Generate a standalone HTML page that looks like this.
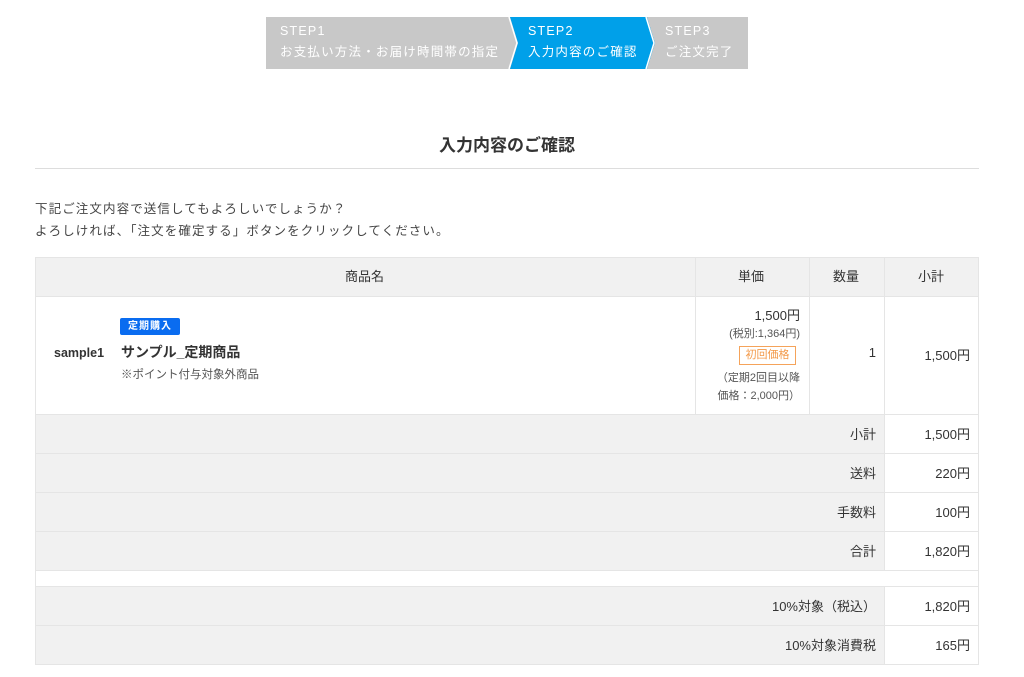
<!DOCTYPE html>
<html><head><meta charset="utf-8"><style>
*{margin:0;padding:0;box-sizing:border-box}
body{width:1024px;height:677px;background:#fff;font-family:"Liberation Sans","Noto Sans CJK JP",sans-serif;color:#333;position:relative;overflow:hidden}
.a{position:absolute;white-space:nowrap}
.st{color:#fff;font-size:12.5px;line-height:21px;letter-spacing:1.2px}
.c{position:absolute;border:1px solid #e5e5e5}
.g{background:#f1f1f1}
.r{text-align:right}
.t{font-size:13px;position:absolute;white-space:nowrap}
</style></head><body>
<svg class="a" style="left:0;top:0" width="1024" height="80">
<rect x="266" y="17" width="482" height="52" fill="#c8c8c8"/>
<polygon points="510,17 647,17 655,43 647,69 510,69 518,43" fill="#00a0e9"/>
<polyline points="646,17 654,43 646,69" fill="none" stroke="#fff" stroke-width="1.5"/>
<polyline points="509,17 517,43 509,69" fill="none" stroke="#fff" stroke-width="1.5"/>
</svg>
<div class="a st" style="left:280px;top:21px">STEP1<br>お支払い方法・お届け時間帯の指定</div>
<div class="a st" style="left:528px;top:21px">STEP2<br>入力内容のご確認</div>
<div class="a st" style="left:665px;top:21px">STEP3<br>ご注文完了</div>
<div class="a" style="left:0;width:1014px;top:131px;text-align:center;font-size:17px;font-weight:bold;color:#333">入力内容のご確認</div>
<div class="a" style="left:35px;top:168px;width:944px;height:1px;background:#ddd"></div>
<div class="a" style="left:35px;top:198px;font-size:12.5px;line-height:22px;letter-spacing:1.1px;color:#444">下記ご注文内容で送信してもよろしいでしょうか？<br>よろしければ、「注文を確定する」ボタンをクリックしてください。</div>

<div class="c g" style="left:35px;top:257px;width:661px;height:40px"></div>
<div class="c g" style="left:695px;top:257px;width:115px;height:40px"></div>
<div class="c g" style="left:809px;top:257px;width:76px;height:40px"></div>
<div class="c g" style="left:884px;top:257px;width:95px;height:40px"></div>
<div class="t" style="left:345px;top:266px">商品名</div>
<div class="t" style="left:738px;top:266px">単価</div>
<div class="t" style="left:833px;top:266px">数量</div>
<div class="t" style="left:918px;top:266px">小計</div>

<div class="c" style="left:35px;top:296px;width:661px;height:119px"></div>
<div class="c" style="left:695px;top:296px;width:115px;height:119px"></div>
<div class="c" style="left:809px;top:296px;width:76px;height:119px"></div>
<div class="c" style="left:884px;top:296px;width:95px;height:119px"></div>
<div class="t" style="left:54px;top:346px;font-weight:bold;font-size:12.5px">sample1</div>
<div class="a" style="left:120px;top:318px;width:60px;height:17px;background:#0a6cf0;border-radius:2px;color:#fff;font-size:10px;font-weight:bold;text-align:center;line-height:17px;letter-spacing:1px">定期購入</div>
<div class="t" style="left:121px;top:342px;font-size:14px;font-weight:bold">サンプル_定期商品</div>
<div class="t" style="left:121px;top:366px;font-size:11.5px;color:#555">※ポイント付与対象外商品</div>
<div class="t r" style="left:696px;width:104px;top:305px">1,500円</div>
<div class="t r" style="left:696px;width:104px;top:325px;font-size:11px;color:#555">(税別:1,364円)</div>
<div class="a" style="left:739px;top:346px;width:57px;height:19px;border:1px solid #f5a35a;color:#f39a4a;font-size:11px;text-align:center;line-height:17px">初回価格</div>
<div class="t r" style="left:696px;width:104px;top:369px;font-size:11px;color:#555;line-height:18px">（定期2回目以降<br>価格：2,000円）</div>
<div class="t r" style="left:810px;width:66px;top:345px">1</div>
<div class="t r" style="left:885px;width:85px;top:345px">1,500円</div>

<div class="c g" style="left:35px;top:414px;width:850px;height:40px"></div><div class="c" style="left:884px;top:414px;width:95px;height:40px"></div>
<div class="t r" style="left:36px;width:840px;top:424px">小計</div><div class="t r" style="left:885px;width:85px;top:424px">1,500円</div>
<div class="c g" style="left:35px;top:453px;width:850px;height:40px"></div><div class="c" style="left:884px;top:453px;width:95px;height:40px"></div>
<div class="t r" style="left:36px;width:840px;top:463px">送料</div><div class="t r" style="left:885px;width:85px;top:463px">220円</div>
<div class="c g" style="left:35px;top:492px;width:850px;height:40px"></div><div class="c" style="left:884px;top:492px;width:95px;height:40px"></div>
<div class="t r" style="left:36px;width:840px;top:502px">手数料</div><div class="t r" style="left:885px;width:85px;top:502px">100円</div>
<div class="c g" style="left:35px;top:531px;width:850px;height:40px"></div><div class="c" style="left:884px;top:531px;width:95px;height:40px"></div>
<div class="t r" style="left:36px;width:840px;top:541px">合計</div><div class="t r" style="left:885px;width:85px;top:541px">1,820円</div>
<div class="c" style="left:35px;top:570px;width:944px;height:17px"></div>
<div class="c g" style="left:35px;top:586px;width:850px;height:40px"></div><div class="c" style="left:884px;top:586px;width:95px;height:40px"></div>
<div class="t r" style="left:36px;width:840px;top:596px">10%対象（税込）</div><div class="t r" style="left:885px;width:85px;top:596px">1,820円</div>
<div class="c g" style="left:35px;top:625px;width:850px;height:40px"></div><div class="c" style="left:884px;top:625px;width:95px;height:40px"></div>
<div class="t r" style="left:36px;width:840px;top:635px">10%対象消費税</div><div class="t r" style="left:885px;width:85px;top:635px">165円</div>
</body></html>
